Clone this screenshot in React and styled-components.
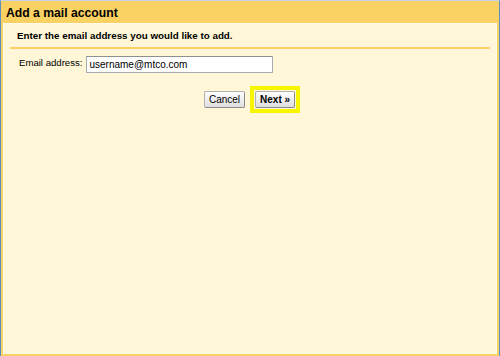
import React from 'react'
import styled, { createGlobalStyle } from 'styled-components'

const GlobalStyle = createGlobalStyle`
  html, body {
    margin: 0;
    padding: 0;
    background: #fff7d7;
  }
  * {
    box-sizing: border-box;
  }
`

const Frame = styled.div`
  width: 500px;
  height: 356px;
  display: flex;
  flex-direction: column;
  padding: 0 2px 2px 2px;
  background: #fad163;
  border-top: 1px solid #c5d3e8;
  border-left: 1px solid #5b8fc4;
  border-right: 1px solid #5b8fc4;
  font-family: 'Liberation Sans', Arial, sans-serif;
  color: #000;
`

const Title = styled.h1`
  margin: 0;
  height: 22px;
  padding: 2px 0 0 3px;
  font-size: 12.2px;
  line-height: 20px;
  font-weight: bold;
`

const Panel = styled.div`
  flex: 1;
  background: #fff7d7;
  border: 1px solid #fffbea;
`

const Intro = styled.div`
  margin: 0 6px;
  padding: 6px 7px 5px;
  font-size: 9.8px;
  line-height: 12px;
  font-weight: bold;
  border-bottom: 2px solid #fad163;
`

const FieldRow = styled.label`
  display: flex;
  align-items: flex-start;
  gap: 4px;
  margin-top: 7px;
  padding-left: 15px;
  font-size: 10px;
`

const FieldLabel = styled.span`
  padding-top: 1px;
  font-size: 9.6px;
  line-height: 12px;
`

const TextInput = styled.input`
  width: 187px;
  height: 17px;
  padding: 0 2px;
  font-family: 'Liberation Sans', Arial, sans-serif;
  font-size: 10px;
  color: #000;
  background: #fff;
  border: 1px solid #a5acb2;
  border-top-color: #8e8f8f;
  outline: none;
`

const Actions = styled.div`
  display: flex;
  justify-content: center;
  align-items: center;
  gap: 5px;
  margin-top: 13px;
  padding-left: 4px;
`

const Button = styled.button`
  height: 17px;
  padding: 0 4px;
  font-family: 'Liberation Sans', Arial, sans-serif;
  font-size: 10px;
  font-weight: ${({ primary }) => (primary ? 'bold' : 'normal')};
  color: #000;
  background: linear-gradient(#fefefe, #dedede);
  border: 1px solid #b0b0b0;
  border-right-color: #8a8a8a;
  border-bottom-color: #8a8a8a;
  border-radius: 2px;
  cursor: pointer;
`

const Highlight = styled.span`
  display: inline-flex;
  padding: 1px;
  border: 4px solid #f7f500;
`

export default function App() {
  return (
    <>
      <GlobalStyle />
      <Frame>
        <Title>Add a mail account</Title>
        <Panel>
          <Intro>Enter the email address you would like to add.</Intro>
          <FieldRow>
            <FieldLabel>Email address:</FieldLabel>
            <TextInput defaultValue="username@mtco.com" />
          </FieldRow>
          <Actions>
            <Button>Cancel</Button>
            <Highlight>
              <Button primary>Next »</Button>
            </Highlight>
          </Actions>
        </Panel>
      </Frame>
    </>
  )
}
